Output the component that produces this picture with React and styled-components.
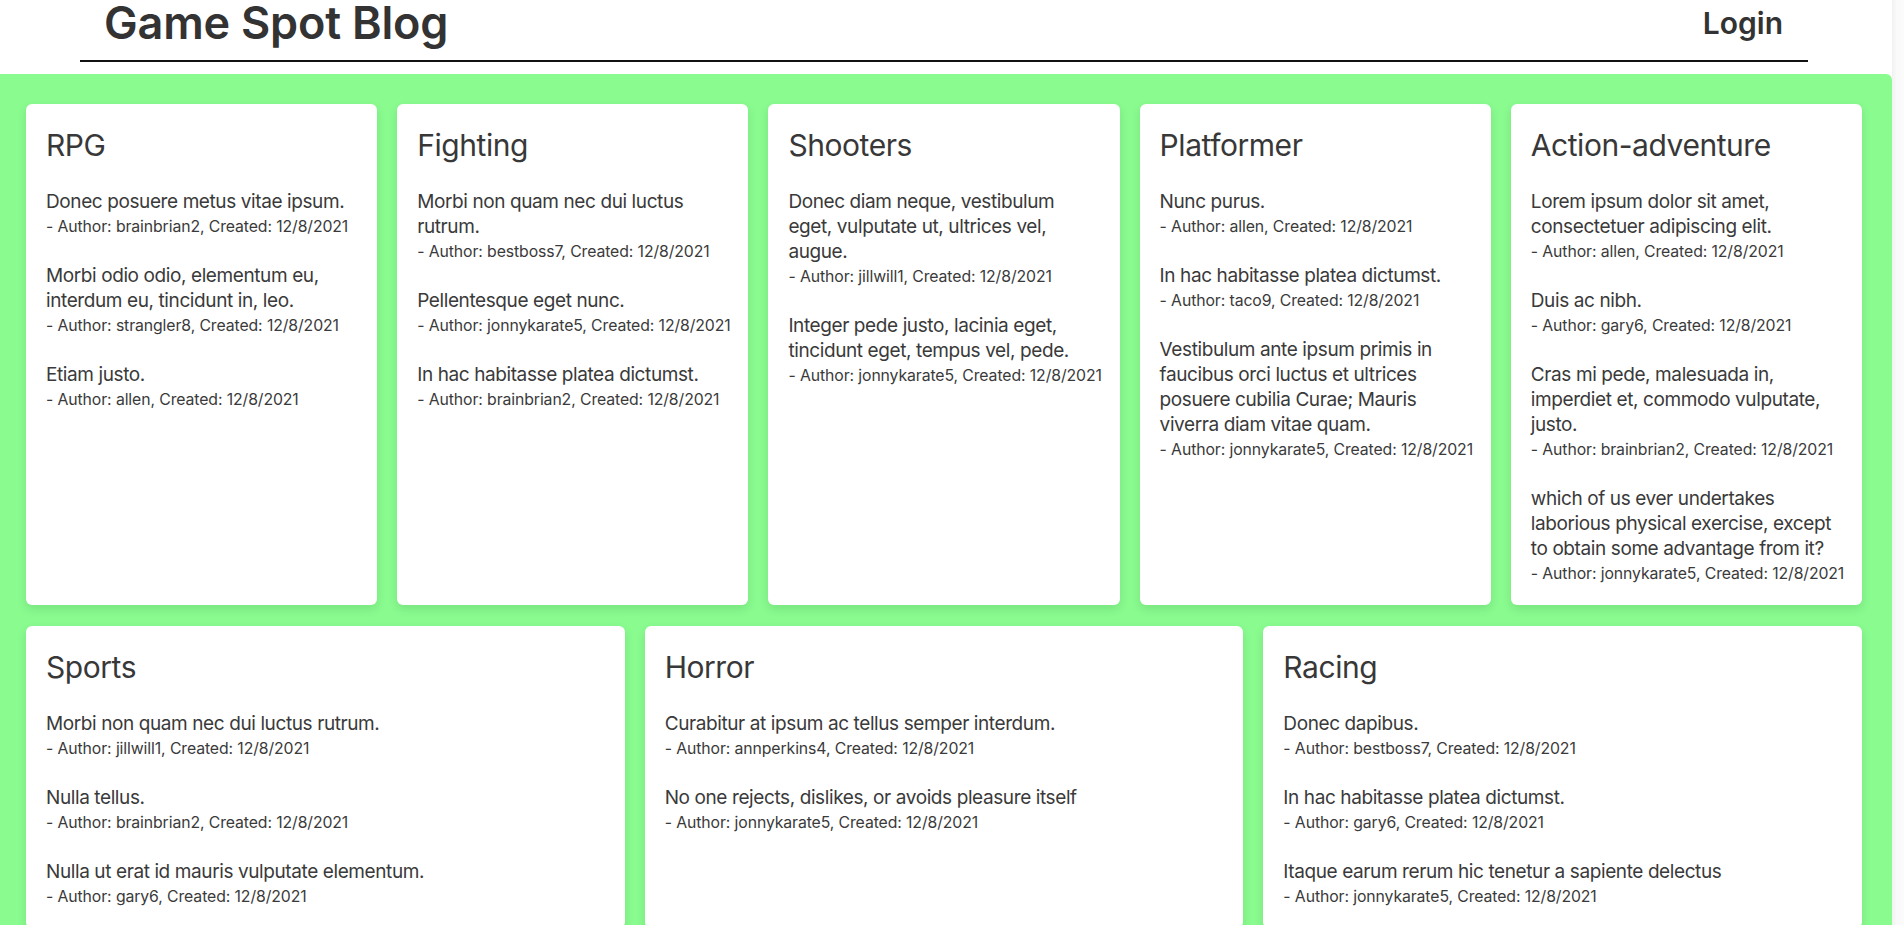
import React from "react";
import styled, { createGlobalStyle } from "styled-components";

const GlobalStyle = createGlobalStyle`
  html, body {
    margin: 0;
    padding: 0;
    overflow: hidden;
    background: #ffffff;
  }
  body {
    font-family: Inter, "Noto Sans", "Liberation Sans", sans-serif;
    color: #333333;
  }
  * { box-sizing: border-box; }
`;

const Shell = styled.div`
  display: flex;
  height: 100vh;
  overflow: hidden;
`;

const Main = styled.div`
  flex: 1;
  min-width: 0;
  display: flex;
  flex-direction: column;
`;

const Gutter = styled.div`
  width: 12px;
  flex: none;
  background: linear-gradient(to right, #f1f1f1, #fafafa 40%, #fbfbfb);
`;

const Header = styled.header`
  display: flex;
  align-items: center;
  justify-content: space-between;
  margin: 0 84px 0 80px;
  padding: 1px 25px 15px 24px;
  border-bottom: 2px solid #111111;
`;

const Brand = styled.h1`
  margin: 0;
  font-size: 45px;
  line-height: 44px;
  font-weight: 600;
  letter-spacing: -0.2px;
  color: #333333;
`;

const LoginLink = styled.a`
  font-size: 30px;
  line-height: 44px;
  font-weight: 600;
  color: #333333;
  text-decoration: none;
  cursor: pointer;
`;

const Board = styled.main`
  margin-top: 12px;
  flex: 1;
  background: #89fb8f;
  border-radius: 0 6px 0 0;
  padding: 30px 30px 30px 26px;
  display: flex;
  flex-wrap: wrap;
  align-content: flex-start;
  gap: 21px 20px;
`;

const Card = styled.section`
  flex: 1 1 300px;
  min-width: 0;
  background: #ffffff;
  border-radius: 6px;
  box-shadow: 0 4px 10px rgba(0, 60, 0, 0.12);
  padding: 22px 20px 18px;
  color: #3a3a3a;
`;

const CardTitle = styled.h2`
  margin: 0 0 25px;
  font-size: 30px;
  line-height: 38px;
  font-weight: 400;
  letter-spacing: -0.45px;
  color: #383838;
`;

const Post = styled.article`
  & + & {
    margin-top: 23px;
  }
`;

const PostText = styled.p`
  margin: 0;
  font-size: 19px;
  line-height: 25px;
  letter-spacing: -0.4px;
  font-weight: 400;
`;

const PostMeta = styled.p`
  margin: 0;
  font-size: 15.8px;
  line-height: 26px;
  letter-spacing: -0.1px;
  white-space: nowrap;
  font-weight: 400;
`;

const DATE = "12/8/2021";

const categories = [
  {
    name: "RPG",
    posts: [
      ["Donec posuere metus vitae ipsum.", "brainbrian2"],
      ["Morbi odio odio, elementum eu, interdum eu, tincidunt in, leo.", "strangler8"],
      ["Etiam justo.", "allen"],
    ],
  },
  {
    name: "Fighting",
    posts: [
      ["Morbi non quam nec dui luctus rutrum.", "bestboss7"],
      ["Pellentesque eget nunc.", "jonnykarate5"],
      ["In hac habitasse platea dictumst.", "brainbrian2"],
    ],
  },
  {
    name: "Shooters",
    posts: [
      ["Donec diam neque, vestibulum eget, vulputate ut, ultrices vel, augue.", "jillwill1"],
      ["Integer pede justo, lacinia eget, tincidunt eget, tempus vel, pede.", "jonnykarate5"],
    ],
  },
  {
    name: "Platformer",
    posts: [
      ["Nunc purus.", "allen"],
      ["In hac habitasse platea dictumst.", "taco9"],
      [
        "Vestibulum ante ipsum primis in faucibus orci luctus et ultrices posuere cubilia Curae; Mauris viverra diam vitae quam.",
        "jonnykarate5",
      ],
    ],
  },
  {
    name: "Action-adventure",
    posts: [
      ["Lorem ipsum dolor sit amet, consectetuer adipiscing elit.", "allen"],
      ["Duis ac nibh.", "gary6"],
      ["Cras mi pede, malesuada in, imperdiet et, commodo vulputate, justo.", "brainbrian2"],
      [
        "which of us ever undertakes laborious physical exercise, except to obtain some advantage from it?",
        "jonnykarate5",
      ],
    ],
  },
  {
    name: "Sports",
    posts: [
      ["Morbi non quam nec dui luctus rutrum.", "jillwill1"],
      ["Nulla tellus.", "brainbrian2"],
      ["Nulla ut erat id mauris vulputate elementum.", "gary6"],
    ],
  },
  {
    name: "Horror",
    posts: [
      ["Curabitur at ipsum ac tellus semper interdum.", "annperkins4"],
      ["No one rejects, dislikes, or avoids pleasure itself", "jonnykarate5"],
    ],
  },
  {
    name: "Racing",
    posts: [
      ["Donec dapibus.", "bestboss7"],
      ["In hac habitasse platea dictumst.", "gary6"],
      ["Itaque earum rerum hic tenetur a sapiente delectus", "jonnykarate5"],
    ],
  },
];

export default function App() {
  return (
    <>
      <GlobalStyle />
      <Shell>
        <Main>
          <Header>
            <Brand>Game Spot Blog</Brand>
            <LoginLink>Login</LoginLink>
          </Header>
          <Board>
            {categories.map((cat) => (
              <Card key={cat.name}>
                <CardTitle>{cat.name}</CardTitle>
                {cat.posts.map(([text, author], i) => (
                  <Post key={i}>
                    <PostText>{text}</PostText>
                    <PostMeta>
                      - Author: {author}, Created: {DATE}
                    </PostMeta>
                  </Post>
                ))}
              </Card>
            ))}
          </Board>
        </Main>
        <Gutter />
      </Shell>
    </>
  );
}
